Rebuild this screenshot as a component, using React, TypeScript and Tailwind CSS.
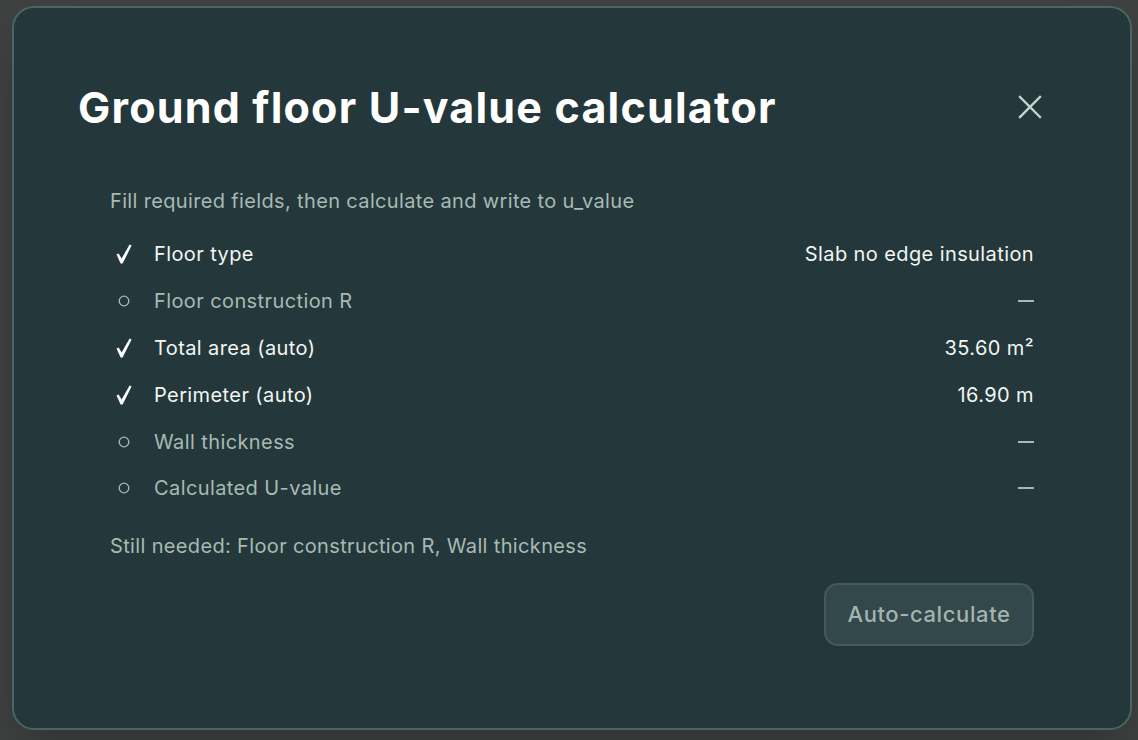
import React from "react";

type Field = {
  label: string;
  value: string;
  done: boolean;
};

const fields: Array<Field> = [
  { label: "Floor type", value: "Slab no edge insulation", done: true },
  { label: "Floor construction R", value: "—", done: false },
  { label: "Total area (auto)", value: "35.60 m²", done: true },
  { label: "Perimeter (auto)", value: "16.90 m", done: true },
  { label: "Wall thickness", value: "—", done: false },
  { label: "Calculated U-value", value: "—", done: false },
];

const CheckMark = () => (
  <svg width="16" height="20" viewBox="0 0 16 20">
    <polygon
      points="0.5,10.6 2.6,9.4 5.6,14.6 13.6,0.4 15.6,1.6 6.6,19.6 4.6,19.6"
      fill="#ffffff"
    />
  </svg>
);

const OpenCircle = () => (
  <svg width="12" height="12" viewBox="0 0 12 12">
    <circle cx="6" cy="6" r="4.8" fill="none" stroke="#a7bab3" strokeWidth="1.3" />
  </svg>
);

const FieldRow: React.FC<Field> = ({ label, value, done }) => (
  <div className="flex h-[46.8px] items-center justify-between text-[20px] tracking-[0.4px]">
    <div className="flex items-center">
      <span className="flex w-[28px] justify-center">
        {done ? <CheckMark /> : <OpenCircle />}
      </span>
      <span className={`ml-[16px] ${done ? "text-[#f2f5f1]" : "text-[#a7bab3]"}`}>
        {label}
      </span>
    </div>
    {value === "—" ? (
      <span className="h-[2px] w-[16px] bg-[#a7bab3]" />
    ) : (
      <span className={done ? "text-[#f2f5f1]" : "text-[#a7bab3]"}>{value}</span>
    )}
  </div>
);

const App: React.FC = () => {
  return (
    <div
      className="h-[740px] w-full overflow-hidden bg-[#3e4140] pl-[12px] pt-[6px]"
      style={{ fontFamily: "Inter, 'Noto Sans', sans-serif" }}
    >
      <div className="h-[724px] w-[1120px] rounded-[22px] border-2 border-[#4b6567] bg-[#24383b] shadow-2xl">
        <div className="flex items-center justify-between pl-[64px] pr-[88px] pt-[75px]">
          <h1 className="text-[43px] font-bold leading-[48px] tracking-[1.2px] text-white">
            Ground floor U-value calculator
          </h1>
          <button className="flex h-[24px] w-[24px] items-center justify-center text-[#c5d4cc]">
            <svg width="24" height="24" viewBox="0 0 24 24" fill="none">
              <path
                d="M2 2L22 22M22 2L2 22"
                stroke="currentColor"
                strokeWidth="2.4"
                strokeLinecap="square"
              />
            </svg>
          </button>
        </div>

        <div className="flex flex-col px-[96px] pt-[56px]">
          <p className="text-[20px] leading-[28px] tracking-[0.35px] text-[#a7bab3]">
            Fill required fields, then calculate and write to u_value
          </p>
          <div className="mt-[16px] flex flex-col">
            {fields.map((field) => (
              <FieldRow
                key={field.label}
                label={field.label}
                value={field.value}
                done={field.done}
              />
            ))}
          </div>
          <p className="mt-[20px] text-[20px] leading-[28px] tracking-[0.35px] text-[#a7bab3]">
            Still needed: Floor construction R, Wall thickness
          </p>
          <div className="mt-[23px] flex justify-end">
            <button className="h-[63px] w-[210px] rounded-[14px] border-2 border-[#44595b] bg-[#32484a] text-[22px] font-medium tracking-[0.6px] text-[#a5b3ae]">
              Auto-calculate
            </button>
          </div>
        </div>
      </div>
    </div>
  );
};

export default App;
